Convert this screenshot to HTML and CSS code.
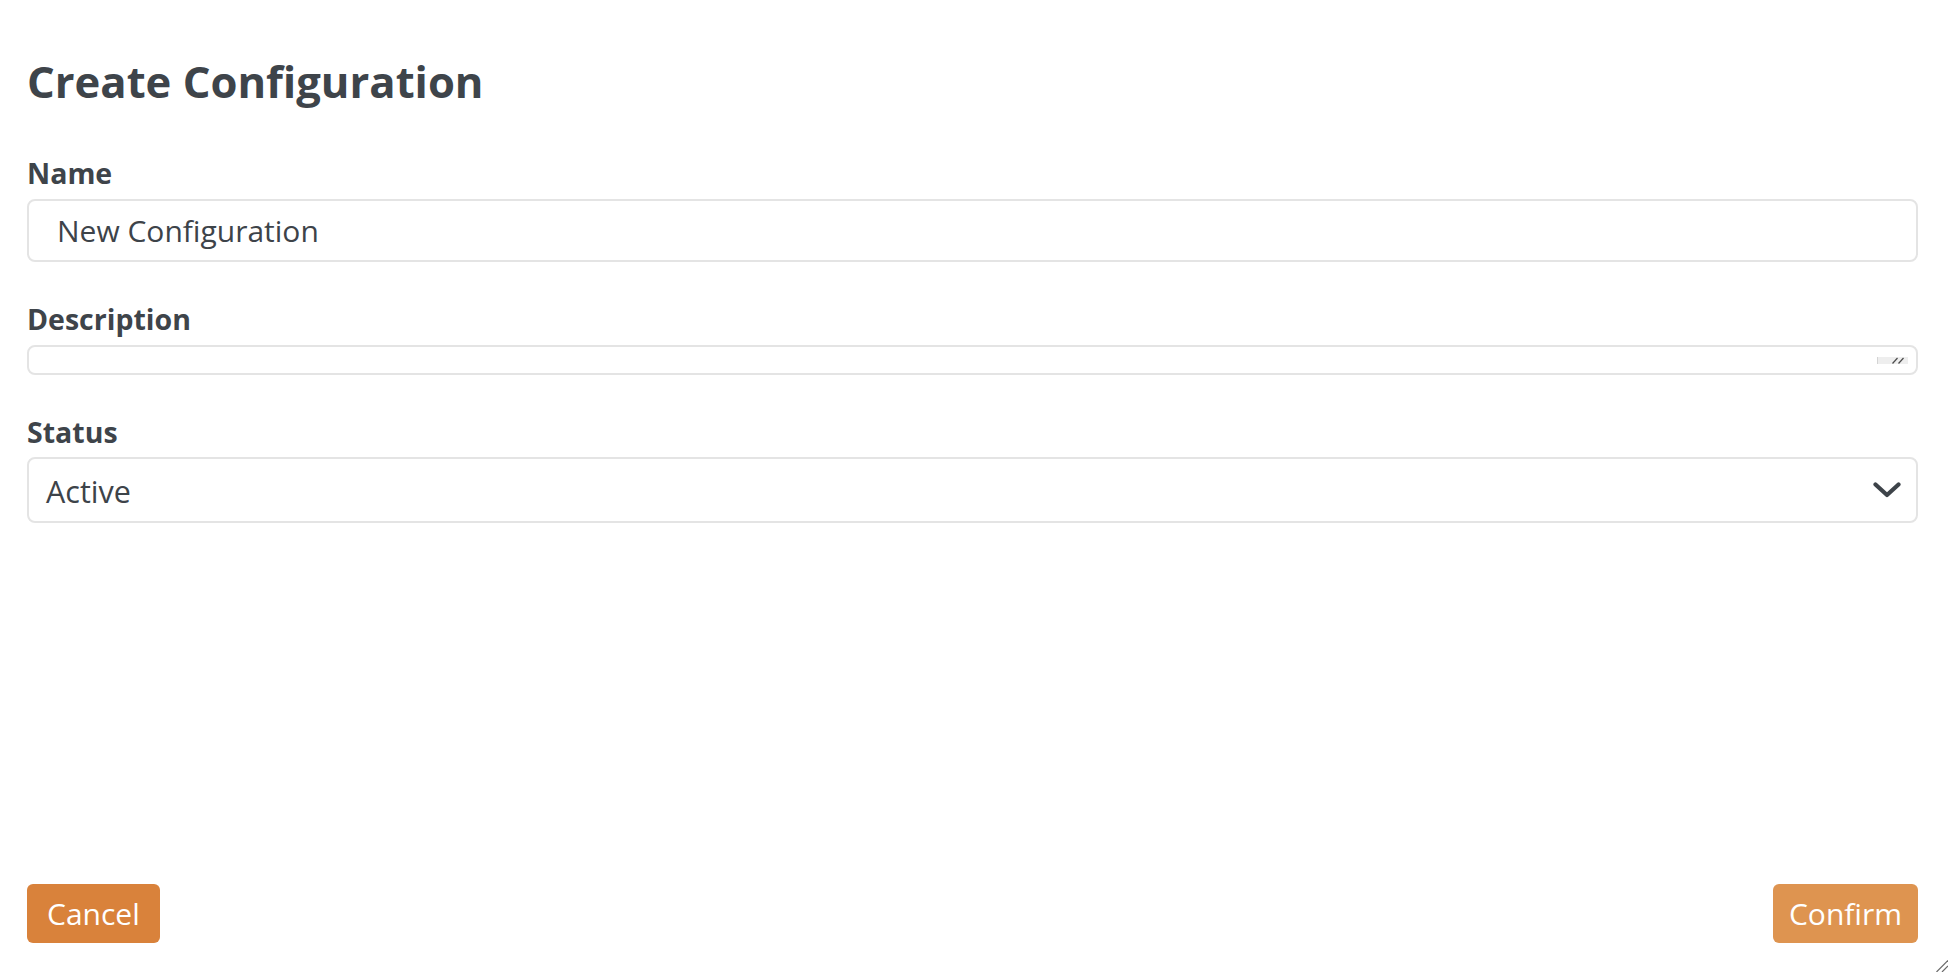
FILE: index.html
```html
<!DOCTYPE html>
<html lang="en">
<head>
<meta charset="utf-8">
<title>Create Configuration</title>
<link rel="stylesheet" href="styles.css">
</head>
<body>
<div class="page">
  <h1 class="title">Create Configuration</h1>
  <div class="form">
    <div class="field">
      <div class="label">Name</div>
      <div class="control control-input">New Configuration</div>
    </div>
    <div class="field">
      <div class="label">Description</div>
      <div class="control control-textarea">
        <svg class="grip" width="31" height="7" viewBox="0 0 31 7" aria-hidden="true">
          <rect x="0" y="0" width="31" height="7" fill="#eeeeee"/>
          <rect x="0" y="0" width="1" height="7" fill="#d4d4d4"/>
          <line x1="15.5" y1="6.5" x2="20.5" y2="1" stroke="#4a4a4a" stroke-width="1.2"/>
          <line x1="21.5" y1="6.5" x2="26.5" y2="1" stroke="#4a4a4a" stroke-width="1.2"/>
        </svg>
      </div>
    </div>
    <div class="field field-status">
      <div class="label">Status</div>
      <div class="control control-select">
        <span>Active</span>
        <svg class="chevron" width="28" height="16" viewBox="0 0 28 16" aria-hidden="true">
          <polyline points="2.5,2.5 14,13 25.5,2.5" fill="none" stroke="#3d4349" stroke-width="4.2" stroke-linecap="round" stroke-linejoin="round"/>
        </svg>
      </div>
    </div>
  </div>
  <div class="actions">
    <button class="btn btn-cancel" type="button">Cancel</button>
    <button class="btn btn-confirm" type="button">Confirm</button>
  </div>
  <svg class="window-grip" width="12" height="12" viewBox="0 0 12 12" aria-hidden="true">
    <line x1="0.5" y1="12" x2="12" y2="0.5" stroke="#6b6b6b" stroke-width="1.2"/>
    <line x1="6" y1="12" x2="12" y2="6" stroke="#6b6b6b" stroke-width="1.2"/>
  </svg>
</div>
</body>
</html>
```
FILE: styles.css
```css
* { box-sizing: border-box; }

html, body {
  margin: 0;
  padding: 0;
  background: #ffffff;
}

body {
  font-family: "Open Sans", "Liberation Sans", sans-serif;
  color: #3d4349;
}

.page {
  position: relative;
  min-height: 100vh;
  display: flex;
  flex-direction: column;
  padding: 55px 30px 29px 27px;
}

.title {
  margin: 0 0 48px 0;
  font-size: 43.6px;
  line-height: 52px;
  font-weight: 700;
  color: #3e444a;
}

.form {
  display: flex;
  flex-direction: column;
  gap: 39px;
}

.field {
  display: flex;
  flex-direction: column;
  gap: 7px;
}

.field-status {
  gap: 6px;
}

.label {
  font-size: 28.5px;
  line-height: 37px;
  font-weight: 700;
  color: #3e444a;
}

.control {
  position: relative;
  border: 2px solid #e4e4e4;
  border-radius: 8px;
  background: #ffffff;
  font-size: 30px;
  color: #3d4349;
}

.control-input {
  height: 63px;
  line-height: 59px;
  padding: 0 28px;
}

.control-textarea {
  height: 30px;
}

.grip {
  position: absolute;
  right: 8px;
  top: 10px;
  display: block;
}

.control-select {
  height: 66px;
  display: flex;
  align-items: center;
  justify-content: space-between;
  padding: 0 15px 0 17px;
  line-height: 1;
  font-size: 30.5px;
}

.control-select span {
  position: relative;
  top: 1px;
}

.chevron {
  display: block;
}

.actions {
  margin-top: auto;
  display: flex;
  justify-content: space-between;
  align-items: center;
}

.btn {
  height: 59px;
  border: none;
  border-radius: 6px;
  padding: 0 20px;
  font-family: "Open Sans", "Liberation Sans", sans-serif;
  font-size: 30px;
  color: #ffffff;
  cursor: pointer;
}

.btn-cancel {
  background: #d9823b;
}

.btn-confirm {
  background: #de9450;
  padding: 0 16px;
}

.window-grip {
  position: absolute;
  right: 0;
  bottom: 0;
  display: block;
}
```
